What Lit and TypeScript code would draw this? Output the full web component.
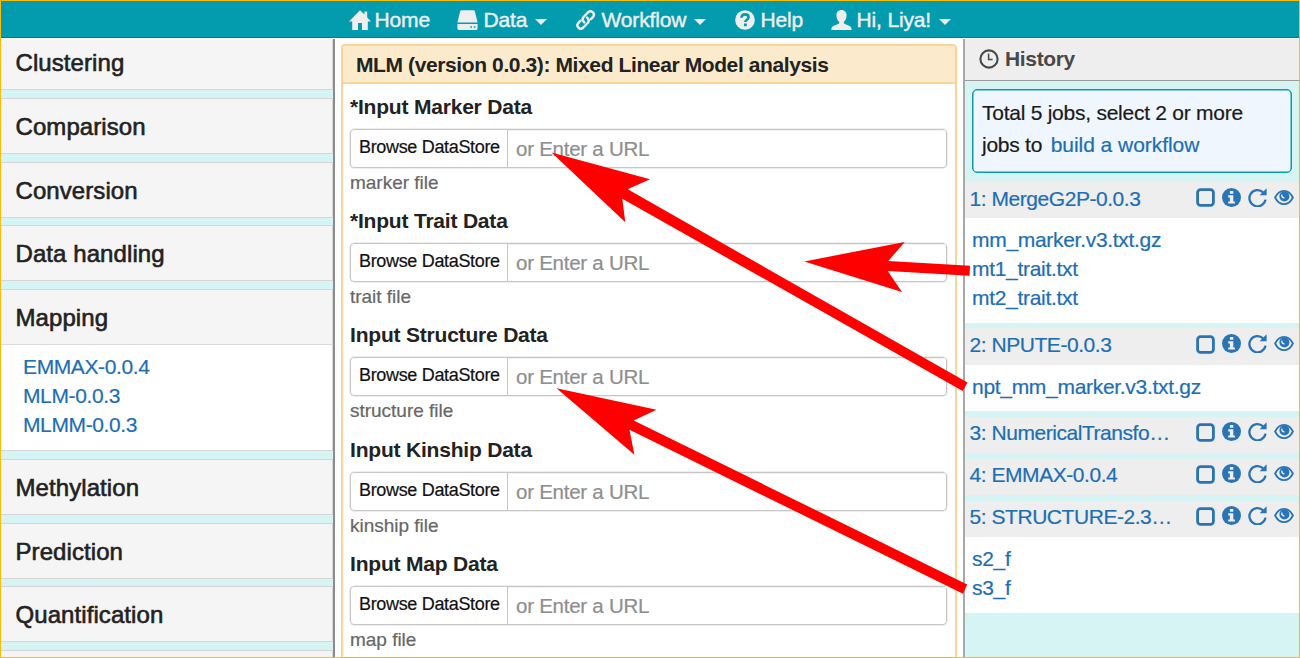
import { LitElement, html, css, svg, nothing } from "lit";
import { customElement } from "lit/decorators.js";

type Job = { name: string; files: string[] };
type Category = { name: string; apps: string[] };

const categories: Category[] = [
  { name: "Clustering", apps: [] },
  { name: "Comparison", apps: [] },
  { name: "Conversion", apps: [] },
  { name: "Data handling", apps: [] },
  { name: "Mapping", apps: ["EMMAX-0.0.4", "MLM-0.0.3", "MLMM-0.0.3"] },
  { name: "Methylation", apps: [] },
  { name: "Prediction", apps: [] },
  { name: "Quantification", apps: [] },
  { name: "", apps: [] },
];

const fields = [
  { label: "*Input Marker Data", help: "marker file" },
  { label: "*Input Trait Data", help: "trait file" },
  { label: "Input Structure Data", help: "structure file" },
  { label: "Input Kinship Data", help: "kinship file" },
  { label: "Input Map Data", help: "map file" },
];

const jobs: Job[] = [
  { name: "1: MergeG2P-0.0.3", files: ["mm_marker.v3.txt.gz", "mt1_trait.txt", "mt2_trait.txt"] },
  { name: "2: NPUTE-0.0.3", files: ["npt_mm_marker.v3.txt.gz"] },
  { name: "3: NumericalTransfo…", files: [] },
  { name: "4: EMMAX-0.0.4", files: [] },
  { name: "5: STRUCTURE-2.3…", files: ["s2_f", "s3_f"] },
];

const glyphs: Record<string, unknown> = {
  home: svg`<path fill="currentColor" d="M11 0.2 L15.4 4.6 V1.6 H18.2 V7.4 L22 11.5 H18.8 V20 H13 V13 H9 V20 H3.2 V11.5 H0 Z"/>`,
  disk: svg`<path fill="currentColor" d="M4.6 0.2 H16.4 Q17.5 0.2 17.8 1.3 L20.6 12.6 H0.4 L3.2 1.3 Q3.5 0.2 4.6 0.2 Z"/>
    <path fill="currentColor" fill-rule="evenodd" d="M0.4 14 H20.6 V18.6 Q20.6 20 19.2 20 H1.8 Q0.4 20 0.4 18.6 Z M13.4 16.2 V17.8 H15 V16.2 Z M16.8 16.2 V17.8 H18.4 V16.2 Z"/>`,
  link: svg`<g fill="none" stroke="currentColor" stroke-width="2.5" stroke-linecap="round" stroke-linejoin="round">
    <path d="M8.2 12.3 C6.4 10.6 6.2 8.6 7.6 7 L11.9 2.5 C13.4 1 15.3 1 16.8 2.3 C18.2 3.7 18.2 5.6 16.9 7.1 L14.9 9.2"/>
    <path d="M11.1 7.7 C12.9 9.4 13.1 11.4 11.7 13 L7.4 17.5 C5.9 19 4 19 2.5 17.7 C1.1 16.3 1.1 14.4 2.4 12.9 L4.4 10.8"/></g>`,
  help: svg`<circle cx="10" cy="10" r="9.8" fill="currentColor"/>
    <path d="M6.5 7.7 C6.5 5.5 7.9 4.4 10 4.4 C12.2 4.4 13.6 5.6 13.6 7.3 C13.6 9.7 10.4 9.7 10.4 12" fill="none" stroke="#039bae" stroke-width="2.6"/>
    <rect x="9" y="13.5" width="2.8" height="2.7" fill="#039bae"/>`,
  user: svg`<path fill="currentColor" d="M10.5 0.1 C13.9 0.1 15.6 2.4 15.6 5.5 C15.6 8.1 14.6 10.2 13 11.7 C12.6 12.8 12.9 13.5 14 14 L18.6 16 C19.9 16.6 20.5 17.7 20.7 20 H0.3 C0.5 17.7 1.1 16.6 2.4 16 L7 14 C8.1 13.5 8.4 12.8 8 11.7 C6.4 10.2 5.4 8.1 5.4 5.5 C5.4 2.4 7.1 0.1 10.5 0.1 Z"/>`,
  clock: svg`<circle cx="10" cy="10" r="8.6" fill="none" stroke="currentColor" stroke-width="2.1"/>
    <path d="M9.6 4.4 V10.6 H13.6" fill="none" stroke="currentColor" stroke-width="1.5"/>`,
  box: svg`<rect x="1.6" y="1.6" width="15.8" height="15.8" rx="3" fill="none" stroke="currentColor" stroke-width="2.8"/>`,
  info: svg`<circle cx="9.5" cy="9.5" r="9.5" fill="currentColor"/>
    <path fill="#eee" d="M7.9 2.9 H11.3 V5.7 H7.9 Z M6.2 7.3 H11.3 V13.5 H12.9 V15.6 H6.2 V13.5 H7.9 V9.4 H6.2 Z"/>`,
  redo: svg`<path d="M15.1 4.3 A8.1 8.1 0 1 0 17.5 11.6" fill="none" stroke="currentColor" stroke-width="2.3"/>
    <path fill="currentColor" d="M18.6 0.3 V7.2 H11.6 Z"/>`,
  eye: svg`<path d="M1.1 8.5 C3.2 4.2 6.4 1.8 10 1.8 C13.6 1.8 16.8 4.2 18.9 8.5 C16.8 12.8 13.6 15.2 10 15.2 C6.4 15.2 3.2 12.8 1.1 8.5 Z" fill="none" stroke="currentColor" stroke-width="1.8"/>
    <circle cx="10.4" cy="7.4" r="5" fill="currentColor"/>
    <path d="M7.8 5.6 C7.6 7.6 8.6 8.9 10.4 8.8" fill="none" stroke="#eee" stroke-width="1.4"/>`,
};

const icon = (name: string, w: number, h: number) =>
  svg`<svg class="icon ${name}" width=${w} height=${h} viewBox="0 0 ${w} ${h}">${glyphs[name]}</svg>`;

@customElement("nav-bar")
class NavBar extends LitElement {
  static styles = css`
    :host { display: block; }
    .bar {
      height: 37px; box-sizing: border-box; padding: 2px 0 0 348px;
      background: #039bae; border-bottom: 1px solid #067a8a; color: #eee;
      display: grid; grid-template-columns: 108px 119px 159px 96px 130px; align-items: center;
      font-size: 21px; -webkit-text-stroke: 0.45px #eee;
    }
    .item { display: flex; align-items: center; height: 34px; }
    .slot { width: 25.5px; display: flex; flex: none; }
    .icon { display: block; }
    .text { white-space: nowrap; letter-spacing: -0.15px; }
    .item:nth-child(2) .text { padding-left: 1px; }
    .caret { margin-left: 8px; border: 6px solid transparent; border-top-color: #eee; border-bottom: 0; margin-top: 3px; }
  `;
  render() {
    const entries: [string, number, string, boolean][] = [
      ["home", 22, "Home", false], ["disk", 21, "Data", true], ["link", 20, "Workflow", true],
      ["help", 20, "Help", false], ["user", 21, "Hi, Liya!", true],
    ];
    return html`<nav class="bar">${entries.map(([g, w, t, menu]) => html`
      <div class="item"><span class="slot">${icon(g, w, 20)}</span><span class="text">${t}</span>${menu ? html`<span class="caret"></span>` : nothing}</div>`)}</nav>`;
  }
}

@customElement("app-catalog")
class AppCatalog extends LitElement {
  static styles = css`
    :host { display: block; overflow: hidden; background: #d6f4f3; border-right: 2px solid #8c8c8c; }
    .list { display: flex; flex-direction: column; gap: 7.7px; margin-top: -4.6px; }
    .card { border: 1px solid #d6d6d6; border-left: 0; background: #fff; }
    .head {
      height: 54px; line-height: 56.4px; padding-left: 14.5px; background: #f5f5f5; color: #222;
      font-size: 24px; letter-spacing: 0.08px; -webkit-text-stroke: 0.6px #222;
    }
    .apps { border-top: 1px solid #dadada; padding: 8px 0 10px 22px; }
    .link { display: block; height: 29px; line-height: 28.4px; font-size: 21px; letter-spacing: -0.38px; color: #1c6eb5; -webkit-text-stroke: 0.2px #1c6eb5; }
  `;
  render() {
    return html`<div class="list">${categories.map(c => html`<section class="card">
      <div class="head">${c.name}</div>
      ${c.apps.length ? html`<div class="apps">${c.apps.map(a => html`<a class="link">${a}</a>`)}</div>` : nothing}
    </section>`)}</div>`;
  }
}

@customElement("app-form")
class AppForm extends LitElement {
  static styles = css`
    :host { display: block; overflow: hidden; background: #fff; padding: 5px 6px 0; }
    .panel { border: 2px solid #fdd497; border-radius: 4px 4px 0 0; height: 640px; }
    .title {
      height: 36px; line-height: 38px; padding-left: 13px; background: #fbebcc; border-bottom: 2px solid #fdd497;
      font-size: 21px; font-weight: bold; letter-spacing: -0.39px; color: #222; white-space: nowrap;
    }
    .fields { padding: 7.6px 8px 0 7px; }
    .group { height: 114.4px; display: flex; flex-direction: column; }
    .label { height: 37px; line-height: 30px; font-size: 21px; font-weight: bold; letter-spacing: -0.2px; color: #222; }
    .input { height: 37px; display: flex; border: 1px solid #c6c6c6; box-shadow: 0 0 0 .5px #ddd; border-radius: 4px; }
    .browse { width: 148px; padding-left: 8px; line-height: 35px; font-size: 18px; letter-spacing: -0.33px; color: #111; border-right: 1px solid #c6c6c6; -webkit-text-stroke: 0.2px #111; }
    .url { padding-left: 8px; line-height: 38px; font-size: 20.5px; letter-spacing: -0.25px; color: #8e8e8e; box-shadow: inset 0 1px 1px #f1f1f1; flex: 1; -webkit-text-stroke: 0.2px #8e8e8e; }
    .help { line-height: 30px; font-size: 19px; color: #666; letter-spacing: -0.02px; -webkit-text-stroke: 0.2px #666; }
  `;
  render() {
    return html`<div class="panel">
      <div class="title">MLM (version 0.0.3): Mixed Linear Model analysis</div>
      <div class="fields">${fields.map(f => html`<div class="group">
        <div class="label">${f.label}</div>
        <div class="input"><span class="browse">Browse DataStore</span><span class="url">or Enter a URL</span></div>
        <div class="help">${f.help}</div>
      </div>`)}</div>
    </div>`;
  }
}

@customElement("job-history")
class JobHistory extends LitElement {
  static styles = css`
    :host { display: block; overflow: hidden; background: #d6f4f3; border-left: 2px solid #a8a8a8; font-size: 21px; }
    .head {
      height: 42px; box-sizing: border-box; padding: 0 0 1px 14px; display: flex; align-items: center; gap: 6px;
      background: #eee; border-bottom: 1px solid #9a9a9a; color: #484848;
    }
    .title { font-weight: bold; letter-spacing: -0.35px; }
    .icon { display: block; flex: none; }
    .note {
      margin: 8px 7px 9px; height: 84px; box-sizing: border-box; padding: 7px 0 0 9px; line-height: 32px;
      border: 1px solid #0c9aad; box-shadow: inset 0 0 0 .5px #0c9aad; border-radius: 5px; background: #eff6fe; color: #1a1a1a;
      letter-spacing: -0.25px; white-space: nowrap; -webkit-text-stroke-width: 0.2px;
    }
    .build { color: #1c6eb5; letter-spacing: -0.05px; margin-left: 3px; }
    .jobs { display: flex; flex-direction: column; gap: 5.6px; color: #1c6eb5; -webkit-text-stroke-width: 0.2px; }
    .job { height: 36.4px; padding: 0 5px 0 4.5px; display: flex; align-items: center; background: #eee; }
    .name { flex: 1; line-height: 32px; margin-top: -3.4px; white-space: nowrap; letter-spacing: -0.45px; }
    .tools { display: flex; align-items: center; gap: 7px; margin-top: -6px; color: #2a74b6; }
    .box { margin-top: 1px; }
    .files { background: #fff; padding: 7.8px 0 9.6px 7px; letter-spacing: -0.3px; }
    .file { display: block; height: 29px; line-height: 28.4px; }
  `;
  render() {
    return html`
      <div class="head">${icon("clock", 20, 20)}<span class="title">History</span></div>
      <div class="note">Total 5 jobs, select 2 or more<br>jobs to <a class="build">build a workflow</a></div>
      <div class="jobs">${jobs.map(j => html`<section>
        <div class="job"><span class="name">${j.name}</span>
          <span class="tools">${icon("box", 19, 19)}${icon("info", 19, 19)}${icon("redo", 19, 19)}${icon("eye", 20, 17)}</span></div>
        ${j.files.length ? html`<div class="files">${j.files.map(f => html`<a class="file">${f}</a>`)}</div>` : nothing}
      </section>`)}</div>`;
  }
}

@customElement("app-root")
class AppRoot extends LitElement {
  static styles = css`
    :host {
      display: block; position: relative; width: 1300px; height: 658px; box-sizing: border-box; overflow: hidden;
      border: 1px solid #fbbc0c; font-family: "Liberation Sans", Arial, sans-serif; background: #fff;
    }
    .columns { display: grid; grid-template-columns: 334px 628px 336px; grid-template-rows: 618px; padding-top: 1px; }
    .arrows { position: absolute; left: -1px; top: -1px; pointer-events: none; }
  `;
  render() {
    return html`
      <nav-bar></nav-bar>
      <div class="columns"><app-catalog></app-catalog><app-form></app-form><job-history></job-history></div>
      <svg class="arrows" width="1300" height="658" viewBox="0 0 1300 658" fill="#f00">
        <path d="M551.5 152.5 L650 179.3 L627.7 189.3 L967.5 382.6 L962.7 391 L622.3 198.7 L625.3 222.3 Z"/>
        <path d="M804.3 261.4 L904.7 242 L888.3 261 L970 265.7 L969.6 275.7 L887.7 271 L902 292 Z"/>
        <path d="M556.5 388.3 L656.5 409.7 L633.7 420.5 L967.2 584.6 L963 593.7 L629.5 429.8 L634.4 454.7 Z"/>
      </svg>`;
  }
}
